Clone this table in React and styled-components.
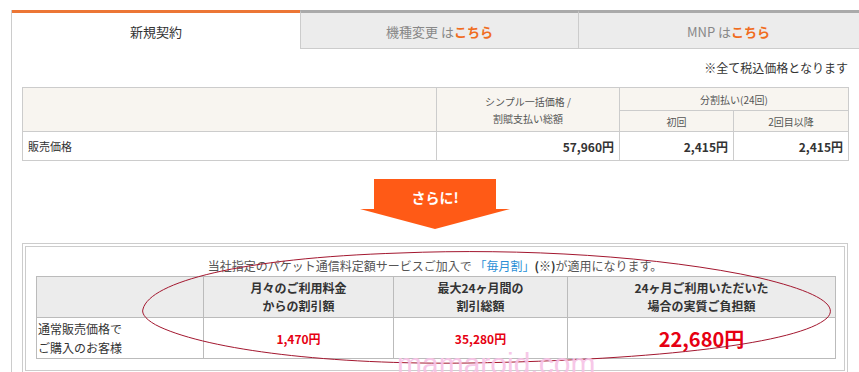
import styled, { createGlobalStyle } from "styled-components";

const GlobalStyle = createGlobalStyle`
  body {
    margin: 0;
    background: #fff;
    font-family: "Noto Sans CJK JP", "Noto Sans", sans-serif;
    color: #333;
  }
`;

const tabs = [
  { label: "新規契約", active: true, width: 288 },
  { label: "機種変更 は", link: "こちら", width: 278 },
  { label: "MNP は", link: "こちら", width: 300 },
];

const App = () => {
  return (
    <StPage>
      <GlobalStyle />
      <StPanel>
        <StTabRow>
          {tabs.map((t) => (
            <StTab key={t.label} $active={t.active} $width={t.width}>
              {t.label}
              {t.link && <StTabLink>{t.link}</StTabLink>}
            </StTab>
          ))}
        </StTabRow>

        <StBody>
          <StNote>※全て税込価格となります</StNote>

          <StPriceTable>
            <colgroup>
              <col style={{ width: 414 }} />
              <col style={{ width: 183 }} />
              <col style={{ width: 114 }} />
              <col style={{ width: 115 }} />
            </colgroup>
            <tbody>
              <tr>
                <StHeadCell rowSpan={2} />
                <StHeadCell rowSpan={2}>
                  シンプル一括価格 /<br />
                  割賦支払い総額
                </StHeadCell>
                <StHeadCell colSpan={2} $h={22}>
                  分割払い(24回)
                </StHeadCell>
              </tr>
              <tr>
                <StHeadCell $h={20}>初回</StHeadCell>
                <StHeadCell $h={20}>2回目以降</StHeadCell>
              </tr>
              <tr>
                <StLabelCell>販売価格</StLabelCell>
                <StPriceCell>57,960円</StPriceCell>
                <StPriceCell>2,415円</StPriceCell>
                <StPriceCell>2,415円</StPriceCell>
              </tr>
            </tbody>
          </StPriceTable>

          <StArrowWrap>
            <StArrowBody>さらに!</StArrowBody>
            <StArrowHead />
          </StArrowWrap>

          <StDiscountOuter>
            <StDiscountInner>
              <StLead>
                当社指定のパケット通信料定額サービスご加入で
                <StBlue> 「毎月割」</StBlue>
                <b>(※)</b>が適用になります。
              </StLead>
              <StDiscountTable>
                <colgroup>
                  <col style={{ width: 167 }} />
                  <col style={{ width: 190 }} />
                  <col style={{ width: 174 }} />
                  <col style={{ width: 268 }} />
                </colgroup>
                <tbody>
                  <tr>
                    <StGrayHead />
                    <StGrayHead>
                      月々のご利用料金
                      <br />
                      からの割引額
                    </StGrayHead>
                    <StGrayHead>
                      最大24ヶ月間の
                      <br />
                      割引総額
                    </StGrayHead>
                    <StGrayHead>
                      24ヶ月ご利用いただいた
                      <br />
                      場合の実質ご負担額
                    </StGrayHead>
                  </tr>
                  <tr>
                    <StCustomerCell>
                      通常販売価格で
                      <br />
                      ご購入のお客様
                    </StCustomerCell>
                    <StRedCell>1,470円</StRedCell>
                    <StRedCell>35,280円</StRedCell>
                    <StRedCell $big>22,680円</StRedCell>
                  </tr>
                </tbody>
              </StDiscountTable>
            </StDiscountInner>
          </StDiscountOuter>
        </StBody>
      </StPanel>

      {/* hand-drawn circle marking the discount columns */}
      <StMarkup viewBox="0 0 859 372" width="859" height="372">
        <path
          d="M143 309 C 150 282, 240 258, 400 253 C 520 248, 660 256, 760 278 C 815 291, 840 305, 827 318 C 800 343, 660 360, 470 363 C 330 365, 210 350, 160 327 C 147 321, 141 314, 143 309 Z"
          fill="none"
          stroke="#a3172f"
          strokeWidth="1"
        />
      </StMarkup>
      <StWatermark>mamaroid.com</StWatermark>
    </StPage>
  );
};

const StPage = styled.div`
  position: relative;
  width: 859px;
  height: 372px;
  overflow: hidden;
  box-sizing: border-box;
  padding: 10px 0 0 11px;
`;

const StPanel = styled.div`
  width: 870px;
  height: 400px;
  border-left: 1px solid #ccc;
`;

const StTabRow = styled.div`
  display: flex;
  height: 39px;
`;

const StTab = styled.div`
  flex: none;
  box-sizing: border-box;
  width: ${(p) => p.$width}px;
  display: flex;
  align-items: center;
  justify-content: center;
  font-size: 13px;
  padding-top: 1px;
  border-top: 3px solid ${(p) => (p.$active ? "#ec7635" : "#aaa")};
  background: ${(p) => (p.$active ? "#fff" : "#ececec")};
  color: ${(p) => (p.$active ? "#333" : "#888")};
  border-left: ${(p) => (p.$active ? "none" : "1px solid #ccc")};
  border-bottom: ${(p) => (p.$active ? "none" : "1px solid #ccc")};
`;

const StTabLink = styled.span`
  color: #f06d1f;
  font-weight: bold;
`;

const StBody = styled.div`
  width: 826px;
  padding: 0 10px;
`;

const StNote = styled.div`
  text-align: right;
  font-size: 12px;
  line-height: 16px;
  padding-top: 11px;
  color: #333;
`;

const StPriceTable = styled.table`
  margin-top: 11px;
  width: 826px;
  border-collapse: collapse;
  table-layout: fixed;
  font-size: 12px;

  td {
    border: 1px solid #ccc;
    padding: 0 5px;
  }
`;

const StHeadCell = styled.td`
  background: #f8f5f0;
  text-align: center;
  font-size: 10px;
  line-height: 17px;
  color: #555;
  height: ${(p) => (p.$h ? `${p.$h}px` : "auto")};
  vertical-align: ${(p) => (p.$h ? "middle" : "top")};
  padding-top: ${(p) => (p.$h ? "0" : "5px")} !important;
`;

const StLabelCell = styled.td`
  height: 28px;
  font-size: 11px;
  text-align: left;
  color: #333;
`;

const StPriceCell = styled.td`
  text-align: right;
  font-weight: bold;
  font-size: 12px;
  color: #333;
`;

const StArrowWrap = styled.div`
  display: flex;
  flex-direction: column;
  align-items: center;
  margin-top: 18px;
`;

const StArrowBody = styled.div`
  width: 122px;
  height: 30px;
  box-sizing: border-box;
  padding-top: 10px;
  background: #ff5a16;
  color: #fff;
  font-weight: bold;
  font-size: 14px;
  line-height: 16px;
  text-align: center;
`;

const StArrowHead = styled.div`
  width: 0;
  height: 0;
  border-left: 75px solid transparent;
  border-right: 75px solid transparent;
  border-top: 20px solid #ff5a16;
`;

const StDiscountOuter = styled.div`
  margin-top: 14px;
  border: 1px solid #ccc;
  padding: 2px;
`;

const StDiscountInner = styled.div`
  border: 1px solid #ccc;
  padding: 10px 10px 11px;
`;

const StLead = styled.div`
  text-align: center;
  font-size: 12px;
  line-height: 17px;
  color: #555;

  b {
    color: #333;
  }
`;

const StBlue = styled.span`
  color: #2b8fd6;
`;

const StDiscountTable = styled.table`
  margin-top: 2px;
  width: 799px;
  border-collapse: collapse;
  table-layout: fixed;

  td {
    border: 1px solid #bbb;
  }
`;

const StGrayHead = styled.td`
  background: #ececec;
  height: 38px;
  text-align: center;
  font-weight: bold;
  font-size: 12px;
  line-height: 18px;
  color: #333;
`;

const StCustomerCell = styled.td`
  height: 38px;
  font-size: 12px;
  line-height: 19px;
  padding-left: 1px;
  color: #333;
`;

const StRedCell = styled.td`
  text-align: center;
  font-weight: bold;
  color: #e60012;
  font-size: ${(p) => (p.$big ? "20px" : "12px")};
`;

const StMarkup = styled.svg`
  position: absolute;
  left: 0;
  top: 0;
  pointer-events: none;
`;

const StWatermark = styled.div`
  position: absolute;
  left: 397px;
  top: 349px;
  font-family: "Liberation Sans", Arial, sans-serif;
  font-size: 30px;
  line-height: 30px;
  color: #f7c3e6;
  opacity: 0.9;
  pointer-events: none;
`;

export default App;
